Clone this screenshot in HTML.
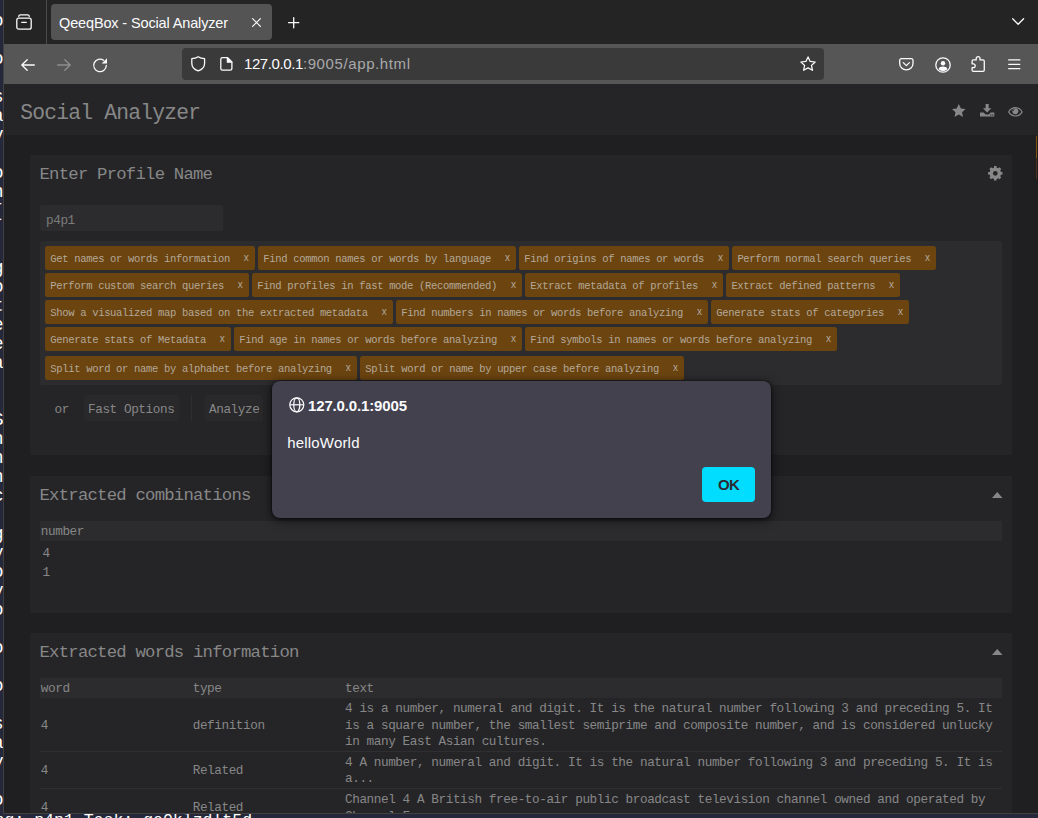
<!DOCTYPE html>
<html><head><meta charset="utf-8"><title>QeeqBox - Social Analyzer</title>
<style>
*{box-sizing:border-box;margin:0;padding:0}
html,body{width:1038px;height:818px;overflow:hidden;background:#25283a;font-family:"Liberation Sans",sans-serif}
.a{position:absolute}
svg{position:absolute;overflow:visible}
#term{position:absolute;left:0;top:0;width:1038px;height:818px;background:#25283a;color:#fff;font-family:"Liberation Mono",monospace;font-size:16.5px;overflow:hidden}
#term span{position:absolute;white-space:pre;line-height:19px;height:19px}
#win{position:absolute;left:3px;top:0;width:1035px;height:814px;background:#1f1f22;border-left:1px solid #414141;border-bottom:1px solid #414141;overflow:hidden}
#tabbar{position:absolute;left:0;top:0;width:1034px;height:44px;background:#242424}
#navbar{position:absolute;left:0;top:44px;width:1034px;height:40px;background:#565656}
#tab{position:absolute;left:47px;top:4px;width:221px;height:36px;background:#545454;border-radius:4px}
#tabt{position:absolute;left:8px;top:1px;line-height:36px;color:#fbfbfe;font-size:14.5px;white-space:nowrap;letter-spacing:-0.14px}
#url{position:absolute;left:178px;top:4px;width:642px;height:31.5px;background:#3a3a3a;border-radius:4px}
#urlt{position:absolute;left:62px;top:0.3px;line-height:31px;font-size:15px;white-space:nowrap;color:#fbfbfe}
#page{position:absolute;left:0;top:84px;width:1034px;height:729px;background:#1f1f22;font-family:"Liberation Mono",monospace;color:#878787;overflow:hidden}
#hdr{position:absolute;left:0;top:0;width:1034px;height:51px;background:#252527}
.panel{position:absolute;left:26px;width:982px;background:#252528}
.m{position:absolute;white-space:pre;font-family:"Liberation Mono",monospace}
.m10{font-size:10.56px;letter-spacing:-0.336px;line-height:14px}
.m12{font-size:12.7px;letter-spacing:-0.42px;line-height:16px}
.m16{font-size:17.3px;letter-spacing:-0.775px;line-height:22px}
.m20{font-size:21.3px;letter-spacing:-0.78px;line-height:28px}
.tag{position:absolute;height:24px;background:#6b4410;color:#b3a898;border-radius:2.5px}
.tx{position:absolute;top:5.3px;font-family:"Liberation Sans",sans-serif;font-size:10px;line-height:14px}
.hrow{position:absolute;left:10px;width:962px;height:20px;background:#2c2c2e}
.btn{position:absolute;height:26px;background:#29292b;border-radius:2px}
.ln{position:absolute;left:10px;width:962px;height:1px;background:#2f2f31}
#dlg{font-family:"Liberation Sans",sans-serif;position:absolute;left:268px;top:380.5px;width:499px;height:137.5px;background:#42414d;border-radius:8px;box-shadow:0 2px 12px rgba(0,0,0,.45),0 1px 5px rgba(0,0,0,.55),0 0 0 1px rgba(15,15,20,.3)}
#ok{position:absolute;left:430px;top:86.5px;width:53px;height:35px;background:#00ddff;border-radius:4px;color:#2b2a33;font-weight:bold;font-size:15px;line-height:35px;text-align:center;letter-spacing:-0.7px}
</style></head><body>
<div id="term">
<span style="left:-7.3px;top:11.5px;font-size:18px">o</span>
<span style="left:-7.3px;top:49.5px;font-size:18px">o</span>
<span style="left:-7.3px;top:87.5px;font-size:18px">s</span>
<span style="left:-7.3px;top:106.5px;font-size:18px">a</span>
<span style="left:-7.3px;top:125.5px;font-size:18px">y</span>
<span style="left:-7.3px;top:163.5px;font-size:18px">o</span>
<span style="left:-7.3px;top:182.5px;font-size:18px">n</span>
<span style="left:-7.3px;top:201.5px;font-size:18px">[</span>
<span style="left:-7.3px;top:258.5px;font-size:18px">g</span>
<span style="left:-7.3px;top:277.5px;font-size:18px">o</span>
<span style="left:-7.3px;top:296.5px;font-size:18px">t</span>
<span style="left:-7.3px;top:315.5px;font-size:18px">e</span>
<span style="left:-7.3px;top:334.5px;font-size:18px">e</span>
<span style="left:-7.3px;top:353.5px;font-size:18px">a</span>
<span style="left:-7.3px;top:410.5px;font-size:18px">S</span>
<span style="left:-7.3px;top:429.5px;font-size:18px">n</span>
<span style="left:-7.3px;top:448.5px;font-size:18px">n</span>
<span style="left:-7.3px;top:467.5px;font-size:18px">n</span>
<span style="left:-7.3px;top:486.5px;font-size:18px">c</span>
<span style="left:-7.3px;top:524.5px;font-size:18px">g</span>
<span style="left:-7.3px;top:543.5px;font-size:18px">y</span>
<span style="left:-7.3px;top:562.5px;font-size:18px">o</span>
<span style="left:-7.3px;top:581.5px;font-size:18px">y</span>
<span style="left:-7.3px;top:600.5px;font-size:18px">o</span>
<span style="left:-7.3px;top:638.5px;font-size:18px">o</span>
<span style="left:-7.3px;top:676.5px;font-size:18px">o</span>
<span style="left:-7.3px;top:714.5px;font-size:18px">s</span>
<span style="left:-7.3px;top:733.5px;font-size:18px">a</span>
<span style="left:-7.3px;top:752.5px;font-size:18px">y</span>
<span style="left:-7.3px;top:790.5px;font-size:18px">o</span>
<span style="left:-6.5px;top:239.5px;color:#c0392b">:</span>
<span style="left:-5.4px;top:810.7px">ng: p4p1 Task: ge0klzd!t5d</span>
</div>
<div id="win">
<div id="tabbar">
<svg style="left:12px;top:14px" width="16" height="16" viewBox="0 0 16 16" fill="none" stroke="#fbfbfe" stroke-width="1.3" stroke-linecap="round" stroke-linejoin="round"><path d="M2.7 2.4Q2.9 0.9 4.4 0.9H11.6Q13.1 0.9 13.3 2.4"/><rect x="0.8" y="4.2" width="14.4" height="11" rx="2"/><path d="M5.8 8.4h4.4"/></svg>
<div class="a" style="left:42px;top:0;width:1px;height:44px;background:#4a4a4a"></div>
<div id="tab"><div id="tabt">QeeqBox - Social Analyzer</div>
<svg style="left:201px;top:14px" width="9" height="9" viewBox="0 0 9 9" stroke="#fbfbfe" stroke-width="1.2" stroke-linecap="round"><path d="M0.6 0.6L8.4 8.4M8.4 0.6L0.6 8.4"/></svg>
</div>
<svg style="left:284.3px;top:17.3px" width="11.4" height="11.4" viewBox="0 0 11.4 11.4" stroke="#fbfbfe" stroke-width="1.3" stroke-linecap="round"><path d="M5.7 0.6V10.8M0.6 5.7H10.8"/></svg>
<svg style="left:1008px;top:17.9px" width="12.3" height="7" viewBox="0 0 12.3 7" fill="none" stroke="#fbfbfe" stroke-width="1.3" stroke-linecap="round" stroke-linejoin="round"><path d="M0.7 0.7L6.15 6.2L11.6 0.7"/></svg>
</div>
<div id="navbar">
<svg style="left:17px;top:14.9px" width="14" height="12" viewBox="0 0 14 12" fill="none" stroke="#fbfbfe" stroke-width="1.3" stroke-linecap="round" stroke-linejoin="round"><path d="M13.3 6H0.9M6.2 0.7L0.8 6L6.2 11.3"/></svg>
<svg style="left:53px;top:14.9px" width="14" height="12" viewBox="0 0 14 12" fill="none" stroke="#8f8f8f" stroke-width="1.3" stroke-linecap="round" stroke-linejoin="round"><path d="M0.7 6H13.1M7.8 0.7L13.2 6L7.8 11.3"/></svg>
<svg style="left:88.9px;top:13.9px" width="14.6" height="14.2" viewBox="0 0 14.6 14.2" fill="none" stroke="#fbfbfe" stroke-width="1.3" stroke-linecap="round"><path d="M13.3 7.4A6.3 6.3 0 1 1 10.6 2.2"/><path d="M14 0.3V5.6H8.7Z" fill="#fbfbfe" stroke="none"/></svg>
<div id="url">
<svg style="left:8.6px;top:7.8px" width="14.4" height="15.5" viewBox="0 0 14.4 15.5" fill="none" stroke="#fbfbfe" stroke-width="1.3" stroke-linejoin="round"><path d="M7.2 0.8C5.4 2 3.2 2.6 0.8 2.6V7.2C0.8 10.8 3.4 13.6 7.2 14.8C11 13.6 13.6 10.8 13.6 7.2V2.6C11.2 2.6 9 2 7.2 0.8Z"/></svg>
<svg style="left:37.6px;top:8.5px" width="12.6" height="13.8" viewBox="0 0 12.6 13.8" fill="none" stroke="#fbfbfe" stroke-width="1.3" stroke-linejoin="round"><path d="M2.4 0.7H7.6L11.9 5V11.6A1.6 1.6 0 0 1 10.3 13.1H2.4A1.6 1.6 0 0 1 0.8 11.6V2.2A1.6 1.6 0 0 1 2.4 0.7Z"/><path d="M7.4 0.9V5.2H11.7Z" fill="#fbfbfe"/></svg>
<div id="urlt"><span style="letter-spacing:-0.41px">127.0.0.1</span><span style="color:#a9a9ab;letter-spacing:0.61px">:9005/app.html</span></div>
<svg style="left:617.9px;top:8.2px" width="16.1" height="15.3" viewBox="0 0 16.1 15.3" fill="none" stroke="#fbfbfe" stroke-width="1.25" stroke-linejoin="round"><path d="M8.05 0.9L10.2 5.4L15.2 6L11.5 9.4L12.5 14.3L8.05 11.9L3.6 14.3L4.6 9.4L0.9 6L5.9 5.4Z"/></svg>
</div>
<svg style="left:894.8px;top:13.9px" width="14.7" height="12.6" viewBox="0 0 14.7 12.6" fill="none" stroke="#fbfbfe" stroke-width="1.3" stroke-linecap="round" stroke-linejoin="round"><path d="M2.2 0.7H12.5A1.5 1.5 0 0 1 14 2.2V5.4A6.65 6.5 0 0 1 0.7 5.4V2.2A1.5 1.5 0 0 1 2.2 0.7Z"/><path d="M4.3 4.6L7.35 7.6L10.4 4.6"/></svg>
<svg style="left:930.6px;top:12.7px" width="16" height="16" viewBox="0 0 16 16" fill="none" stroke="#fbfbfe" stroke-width="1.3"><circle cx="8" cy="8" r="7.2"/><circle cx="8" cy="6.2" r="2.2" fill="#fbfbfe" stroke="none"/><path d="M3.6 12.2C4.2 10.2 6 9.6 8 9.6S11.8 10.2 12.4 12.2C11.2 13.4 9.7 14 8 14S4.8 13.4 3.6 12.2Z" fill="#fbfbfe" stroke="none"/></svg>
<svg style="left:967.4px;top:11.9px" width="14.4" height="16.1" viewBox="0 0 14.4 16.1" fill="none" stroke="#fbfbfe" stroke-width="1.3" stroke-linejoin="round"><path d="M5.2 3.9V2.6A1.9 1.9 0 0 1 9 2.6V3.9H12A1.3 1.3 0 0 1 13.3 5.2V14.1A1.3 1.3 0 0 1 12 15.4H2.4A1.3 1.3 0 0 1 1.1 14.1V11.6H2.3A1.9 1.9 0 0 0 2.3 7.8H1.1V5.2A1.3 1.3 0 0 1 2.4 3.9Z"/></svg>
<svg style="left:1003.9px;top:14.6px" width="12.5" height="11" viewBox="0 0 12.5 11" stroke="#fbfbfe" stroke-width="1.3" stroke-linecap="round"><path d="M0.7 0.9H11.8M0.7 5.3H11.8M0.7 9.7H11.8"/></svg>
</div>
<div id="page">
<div id="hdr">
<div class="m m20" style="left:16.3px;top:15.1px">Social Analyzer</div>
<svg style="left:947.7px;top:19.700000000000003px" width="13.6" height="13.2" viewBox="0 0 13.6 13.2" fill="#878787"><path d="M6.8 0L8.9 4.4L13.6 5L10.1 8.2L11 13L6.8 10.6L2.6 13L3.5 8.2L0 5L4.7 4.4Z"/></svg>
<svg style="left:975.5px;top:19.700000000000003px" width="14.3" height="12.6" viewBox="0 0 14.3 12.6" fill="#878787"><path d="M5.6 0H8.7V4.3H11.4L7.15 8.6L2.9 4.3H5.6Z"/><path d="M0 8.5H3.6L5.6 10.4H8.7L10.7 8.5H14.3V12.6H0Z"/><rect x="10.2" y="10.4" width="1.2" height="1.1" fill="#252527"/><rect x="12.1" y="10.4" width="1.2" height="1.1" fill="#252527"/></svg>
<svg style="left:1003.6px;top:22.700000000000003px" width="14.8" height="9.6" viewBox="0 0 14.8 9.6" fill="none" stroke="#878787" stroke-width="1.1"><path d="M0.6 4.9C2.2 2 4.6 0.6 7.4 0.6S12.6 2 14.2 4.9C12.6 7.6 10.2 9 7.4 9S2.2 7.6 0.6 4.9Z"/><circle cx="7.4" cy="4.2" r="3" fill="#878787" stroke="none"/><path d="M6.1 2.3A2 2 0 0 0 5.3 4" stroke="#252527" stroke-width="0.9"/></svg>
</div>
<div class="panel" style="top:71px;height:300px">
<div class="m m16" style="left:9.5px;top:8.8px">Enter Profile Name</div>
<svg style="left:958.1px;top:10.8px" width="14.6" height="14.6" viewBox="0 0 14.6 14.6"><path d="M6.04 0.11L8.56 0.11L8.65 1.66L10.33 2.35L11.50 1.33L13.27 3.10L12.25 4.27L12.94 5.95L14.49 6.04L14.49 8.56L12.94 8.65L12.25 10.33L13.27 11.50L11.50 13.27L10.33 12.25L8.65 12.94L8.56 14.49L6.04 14.49L5.95 12.94L4.27 12.25L3.10 13.27L1.33 11.50L2.35 10.33L1.66 8.65L0.11 8.56L0.11 6.04L1.66 5.95L2.35 4.27L1.33 3.10L3.10 1.33L4.27 2.35L5.95 1.66Z M7.3 4.9A2.4 2.4 0 1 0 7.3 9.7A2.4 2.4 0 1 0 7.3 4.9Z" fill="#878787" fill-rule="evenodd"/></svg>
<div class="a" style="left:10px;top:50px;width:183px;height:26px;background:#2c2c2e;border-radius:2px"></div>
<div class="m m12" style="left:16px;top:58.1px;color:#7b7b7b">p4p1</div>
<div class="a" style="left:10px;top:86px;width:962px;height:143.5px;background:#2c2c2e;border-radius:2px"></div>
<div class="tag" style="left:15.0px;top:91.0px;width:210.1px"><span class="m m10" style="left:5.2px;top:6px">Get names or words information</span><span class="tx" style="left:198.8px">x</span></div>
<div class="tag" style="left:228.1px;top:91.0px;width:258.1px"><span class="m m10" style="left:5.2px;top:6px">Find common names or words by language</span><span class="tx" style="left:246.8px">x</span></div>
<div class="tag" style="left:489.1px;top:91.0px;width:210.1px"><span class="m m10" style="left:5.2px;top:6px">Find origins of names or words</span><span class="tx" style="left:198.8px">x</span></div>
<div class="tag" style="left:702.2px;top:91.0px;width:204.1px"><span class="m m10" style="left:5.2px;top:6px">Perform normal search queries</span><span class="tx" style="left:192.8px">x</span></div>
<div class="tag" style="left:15.0px;top:118.0px;width:204.1px"><span class="m m10" style="left:5.2px;top:6px">Perform custom search queries</span><span class="tx" style="left:192.8px">x</span></div>
<div class="tag" style="left:222.1px;top:118.0px;width:270.1px"><span class="m m10" style="left:5.2px;top:6px">Find profiles in fast mode (Recommended)</span><span class="tx" style="left:258.8px">x</span></div>
<div class="tag" style="left:495.1px;top:118.0px;width:198.1px"><span class="m m10" style="left:5.2px;top:6px">Extract metadata of profiles</span><span class="tx" style="left:186.8px">x</span></div>
<div class="tag" style="left:696.2px;top:118.0px;width:174.1px"><span class="m m10" style="left:5.2px;top:6px">Extract defined patterns</span><span class="tx" style="left:162.8px">x</span></div>
<div class="tag" style="left:15.0px;top:145.0px;width:348.1px"><span class="m m10" style="left:5.2px;top:6px">Show a visualized map based on the extracted metadata</span><span class="tx" style="left:336.8px">x</span></div>
<div class="tag" style="left:366.1px;top:145.0px;width:312.1px"><span class="m m10" style="left:5.2px;top:6px">Find numbers in names or words before analyzing</span><span class="tx" style="left:300.8px">x</span></div>
<div class="tag" style="left:681.1px;top:145.0px;width:198.1px"><span class="m m10" style="left:5.2px;top:6px">Generate stats of categories</span><span class="tx" style="left:186.8px">x</span></div>
<div class="tag" style="left:15.0px;top:172.0px;width:186.1px"><span class="m m10" style="left:5.2px;top:6px">Generate stats of Metadata</span><span class="tx" style="left:174.8px">x</span></div>
<div class="tag" style="left:204.1px;top:172.0px;width:288.1px"><span class="m m10" style="left:5.2px;top:6px">Find age in names or words before analyzing</span><span class="tx" style="left:276.8px">x</span></div>
<div class="tag" style="left:495.1px;top:172.0px;width:312.1px"><span class="m m10" style="left:5.2px;top:6px">Find symbols in names or words before analyzing</span><span class="tx" style="left:300.8px">x</span></div>
<div class="tag" style="left:15.0px;top:200.8px;width:312.1px"><span class="m m10" style="left:5.2px;top:6px">Split word or name by alphabet before analyzing</span><span class="tx" style="left:300.8px">x</span></div>
<div class="tag" style="left:330.1px;top:200.8px;width:324.1px"><span class="m m10" style="left:5.2px;top:6px">Split word or name by upper case before analyzing</span><span class="tx" style="left:312.8px">x</span></div>
<div class="m m12" style="left:24.6px;top:246.6px">or</div>
<div class="btn" style="left:54px;top:240px;width:95px"></div>
<div class="m m12" style="left:58px;top:246.6px">Fast Options</div>
<div class="a" style="left:161px;top:240px;width:1px;height:26px;background:#2e2e30"></div>
<div class="btn" style="left:175px;top:240px;width:58px"></div>
<div class="m m12" style="left:179px;top:246.6px">Analyze</div>
</div>
<div class="panel" style="top:391.5px;height:137px">
<div class="m m16" style="left:9.5px;top:9.3px">Extracted combinations</div>
<svg style="left:962px;top:16.80000000000001px" width="10.5" height="6" viewBox="0 0 10.5 6" fill="#878787"><path d="M5.25 0L10.5 6H0Z"/></svg>
<div class="hrow" style="top:45.5px"></div>
<div class="m m12" style="left:10.799999999999997px;top:48.2px">number</div>
<div class="m m12" style="left:12.600000000000001px;top:70.5px">4</div>
<div class="m m12" style="left:12.600000000000001px;top:89.5px">1</div>
</div>
<div class="panel" style="top:548.6px;height:300px">
<div class="m m16" style="left:9.5px;top:9.5px">Extracted words information</div>
<svg style="left:962px;top:16.9px" width="10.5" height="6" viewBox="0 0 10.5 6" fill="#878787"><path d="M5.25 0L10.5 6H0Z"/></svg>
<div class="hrow" style="top:45.4px"></div>
<div class="m m12" style="left:10.8px;top:48.0px">word</div>
<div class="m m12" style="left:162.7px;top:48.0px">type</div>
<div class="m m12" style="left:315.0px;top:48.0px">text</div>
<div class="m m12" style="left:315.0px;top:68.4px">4 is a number, numeral and digit. It is the natural number following 3 and preceding 5. It</div>
<div class="m m12" style="left:315.0px;top:85.2px">is a square number, the smallest semiprime and composite number, and is considered unlucky</div>
<div class="m m12" style="left:315.0px;top:101.9px">in many East Asian cultures.</div>
<div class="m m12" style="left:10.8px;top:85.2px">4</div>
<div class="m m12" style="left:162.7px;top:85.2px">definition</div>
<div class="ln" style="top:118.4px"></div>
<div class="m m12" style="left:315.0px;top:122.2px">4 A number, numeral and digit. It is the natural number following 3 and preceding 5. It is</div>
<div class="m m12" style="left:315.0px;top:138.7px">a...</div>
<div class="m m12" style="left:10.8px;top:130.4px">4</div>
<div class="m m12" style="left:162.7px;top:130.4px">Related</div>
<div class="ln" style="top:155.4px"></div>
<div class="m m12" style="left:315.0px;top:159.4px">Channel 4 A British free-to-air public broadcast television channel owned and operated by</div>
<div class="m m12" style="left:315.0px;top:176.2px">Channel F...</div>
<div class="m m12" style="left:10.8px;top:167.4px">4</div>
<div class="m m12" style="left:162.7px;top:167.4px">Related</div>
</div>
<div class="a" style="left:1031.9px;top:52px;width:1.3px;height:22px;background:#80500f"></div>
<div class="a" style="left:1031.9px;top:74px;width:1.3px;height:21px;background:#4b3117"></div>
<div id="dlg" style="top:296.5px">
<svg style="left:16.8px;top:16.6px" width="15.6" height="15.6" viewBox="0 0 16 16" fill="none" stroke="#fbfbfe" stroke-width="1.25"><circle cx="8" cy="8" r="7.2"/><ellipse cx="8" cy="8" rx="3.1" ry="7.2"/><path d="M0.8 8H15.2"/></svg>
<div class="a" style="left:36.0px;top:16.2px;font-size:15px;line-height:18px;font-weight:bold;color:#fbfbfe;white-space:nowrap;letter-spacing:-0.15px">127.0.0.1:9005</div>
<div class="a" style="left:15.2px;top:53.7px;font-size:15px;line-height:18px;color:#fbfbfe;white-space:nowrap;letter-spacing:0.19px">helloWorld</div>
<div id="ok">OK</div>
</div>
</div>
</div>
</body></html>
